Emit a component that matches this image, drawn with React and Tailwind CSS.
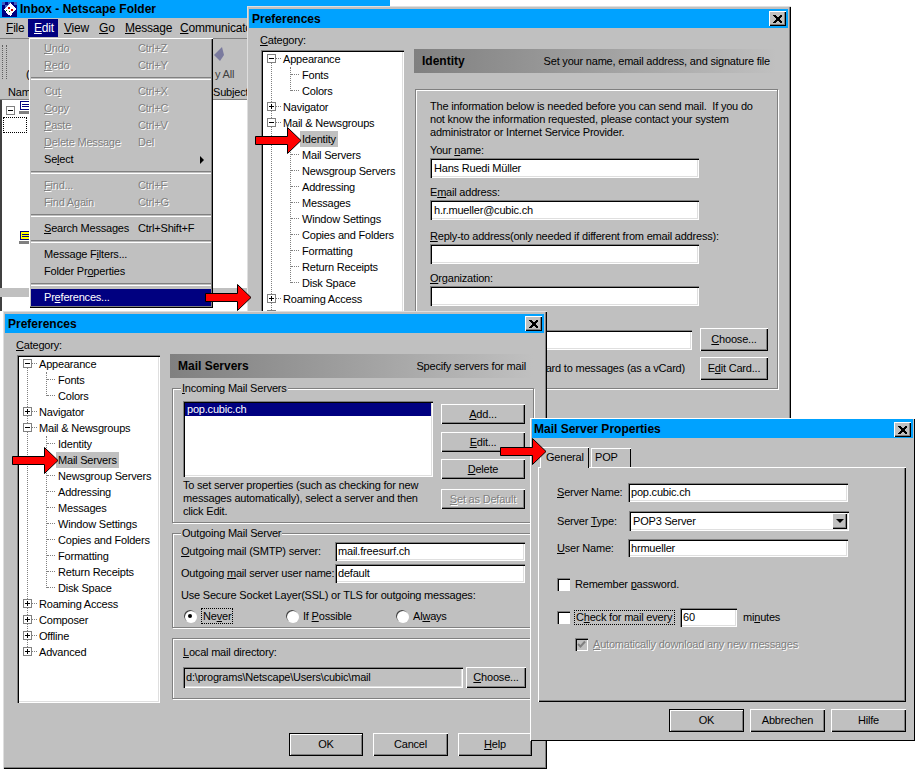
import React from 'react';

const RAISED = 'bg-[#c0c0c0] shadow-[inset_1px_1px_0_#fff,inset_-1px_-1px_0_#000,inset_-2px_-2px_0_#808080]';
const DEFAULT_BTN = 'bg-[#c0c0c0] shadow-[inset_0_0_0_1px_#000,inset_2px_2px_0_#fff,inset_-2px_-2px_0_#808080]';
const SUNKEN = 'shadow-[inset_1px_1px_0_#808080,inset_2px_2px_0_#000,inset_-1px_-1px_0_#fff,inset_-2px_-2px_0_#dfdfdf]';
const DISABLED = 'text-[#808080] [text-shadow:1px_1px_0_#fff]';
const ETCHED = 'relative border border-[#808080] shadow-[1px_1px_0_#fff,inset_1px_1px_0_#fff]';

function Arrow({ className }) {
  return (
    <svg className={`absolute z-50 ${className}`} width="47" height="27" viewBox="0 0 47 27">
      <polygon points="0.5,9.5 32.5,9.5 32.5,0.5 46,13.5 32.5,26.5 32.5,17.5 0.5,17.5" fill="#ff0000" stroke="#000" />
    </svg>
  );
}

function CloseButton() {
  return (
    <div className={`flex h-[15px] w-[17px] items-center justify-center ${RAISED}`}>
      <svg width="9" height="8" viewBox="0 0 9 8" shapeRendering="crispEdges">
        <path d="M0 0h2l2.500 2.500L7 0h2v1L6 4l3 3v1H7L4.500 5.500 2 8H0V7l3-3-3-3z" fill="#000" />
      </svg>
    </div>
  );
}

function TitleBar({ title, children, className = '' }) {
  return (
    <div className={`flex items-center justify-between bg-[#00a2ff] pr-[3px] text-[12px] font-bold tracking-normal text-black ${className}`}>
      <div className="flex items-center gap-[2px]">{children}{title}</div>
    </div>
  );
}

function Button({ children, className = '', isDefault, disabled }) {
  return (
    <div className={`flex items-center justify-center ${isDefault ? DEFAULT_BTN : RAISED} ${disabled ? DISABLED : ''} ${className}`}>
      <span>{children}</span>
    </div>
  );
}

function Input({ value, className = '', bg = 'bg-white', pad = 'pl-[4px]' }) {
  return (
    <div className={`flex items-center overflow-hidden ${bg} ${pad} ${SUNKEN} ${className}`}>
      {value}
    </div>
  );
}

function Toggle({ open, className = 'left-[6px] top-[3px]' }) {
  return (
    <div className={`absolute z-10 flex h-[9px] w-[9px] items-center justify-center border border-[#808080] bg-white ${className}`}>
      <svg width="7" height="7" viewBox="0 0 7 7" shapeRendering="crispEdges">
        <rect x="1" y="3" width="5" height="1" fill="#000" />
        {!open && <rect x="3" y="1" width="1" height="5" fill="#000" />}
      </svg>
    </div>
  );
}

function RootRow({ label, open }) {
  return (
    <div className="relative flex h-4 items-center pl-[22px]">
      <Toggle open={open} />
      <div className="absolute left-[15px] top-[7px] w-[5px] border-t border-dotted border-[#808080]" />
      <span>{label}</span>
    </div>
  );
}

function ChildGroup({ items, selected }) {
  return (
    <div className="relative">
      <div className="absolute bottom-[8px] left-[29px] top-0 border-l border-dotted border-[#808080]" />
      {items.map((item) => (
        <div key={item} className="relative flex h-4 items-center pl-[39px]">
          <div className="absolute left-[30px] top-[7px] w-[8px] border-t border-dotted border-[#808080]" />
          <span className={`px-[2px] leading-4 ${item === selected ? 'bg-[#c0c0c0]' : ''}`}>{item}</span>
        </div>
      ))}
    </div>
  );
}

function Tree({ selected }) {
  return (
    <div className={`relative h-[348px] w-[143px] bg-white pt-px ${SUNKEN}`}>
      <div className="absolute bottom-[50px] left-[10px] top-[8px] border-l border-dotted border-[#808080]" />
      <RootRow label="Appearance" open />
      <ChildGroup items={['Fonts', 'Colors']} selected={selected} />
      <RootRow label="Navigator" />
      <RootRow label="Mail & Newsgroups" open />
      <ChildGroup
        items={['Identity', 'Mail Servers', 'Newsgroup Servers', 'Addressing', 'Messages', 'Window Settings', 'Copies and Folders', 'Formatting', 'Return Receipts', 'Disk Space']}
        selected={selected}
      />
      <RootRow label="Roaming Access" />
      <RootRow label="Composer" />
      <RootRow label="Offline" />
      <RootRow label="Advanced" />
    </div>
  );
}

function Band({ title, subtitle }) {
  return (
    <div className="flex h-6 w-[363px] items-center justify-between bg-linear-to-r from-[#808080] to-[#c0c0c0] pl-2 pr-[7px]">
      <span className="text-[12px] font-bold tracking-normal">{title}</span>
      <span>{subtitle}</span>
    </div>
  );
}

function Legend({ children }) {
  return <div className="absolute -top-[7px] left-[8px] bg-[#c0c0c0] px-px leading-[13px]">{children}</div>;
}

function PrefWindow({ className, selected, children }) {
  return (
    <div className={`absolute h-[458px] w-[544px] bg-[#c0c0c0] py-[3px] pl-[2px] pr-[3px] shadow-[inset_1px_1px_0_#dfdfdf,inset_-1px_-1px_0_#000,inset_-2px_-2px_0_#808080] ${className}`}>
      <TitleBar title="Preferences" className="h-[19px] pl-[3px]" />
      <div className="absolute right-[5px] top-[5px]"><CloseButton /></div>
      <div className="flex pl-3">
        <div className="flex flex-col">
          <div className="-ml-px flex h-[22px] items-center pt-[2px]"><span><u>C</u>ategory:</span></div>
          <Tree selected={selected} />
        </div>
        <div className="ml-[10px] pt-[21px]">{children}</div>
      </div>
    </div>
  );
}

function IdentityPanel() {
  const fields = [
    { label: <>Your <u>n</u>ame:</>, value: 'Hans Ruedi Müller', gap: 'mt-0' },
    { label: <>E<u>m</u>ail address:</>, value: 'h.r.mueller@cubic.ch', gap: 'mt-[7px]' },
    { label: <><u>R</u>eply-to address(only needed if different from email address):</>, value: '', gap: 'mt-[9px]' },
    { label: <><u>O</u>rganization:</>, value: '', gap: 'mt-[7px]' },
  ];
  return (
    <div>
      <Band title="Identity" subtitle="Set your name, email address, and signature file" />
      <div className={`ml-px mt-4 h-[300px] w-[363px] pl-[14px] pt-[10px] ${ETCHED}`}>
        <p className="leading-[13px]">
          The information below is needed before you can send mail.&nbsp; If you do<br />
          not know the information requested, please contact your system<br />
          administrator or Internet Service Provider.
        </p>
        <div className="mt-[4px]">
          {fields.map((field, i) => (
            <div key={i} className={field.gap}>
              <div className="h-[14px] leading-[14px]">{field.label}</div>
              <Input value={field.value} className="mt-[1px] h-5 w-[269px]" />
            </div>
          ))}
        </div>
        <div className="mt-[22px] flex items-center gap-2">
          <Input value="" className="h-5 w-[262px]" />
          <Button className="h-[23px] w-[68px]"><u>C</u>hoose...</Button>
        </div>
        <div className="mt-[6px] flex items-center gap-2">
          <div className="w-[262px] pr-[7px] text-right">ard to messages (as a vCard)</div>
          <Button className="h-[23px] w-[68px]">E<u>d</u>it Card...</Button>
        </div>
      </div>
    </div>
  );
}

function Radio({ checked, label, className = '' }) {
  return (
    <div className={`flex items-center gap-[5px] ${className}`}>
      <div className="flex h-3 w-3 items-center justify-center rounded-full bg-white shadow-[inset_1px_1px_0_#404040,1px_1px_0_#fff]">
        {checked && <div className="h-1 w-1 rounded-full bg-black" />}
      </div>
      {label}
    </div>
  );
}

function MailServersPanel() {
  return (
    <div>
      <Band title="Mail Servers" subtitle="Specify servers for mail" />
      <div className={`ml-[2px] mt-[10px] flex h-[135px] w-[362px] gap-2 pl-[10px] pt-[12px] ${ETCHED}`}>
        <Legend><u>I</u>ncoming Mail Servers</Legend>
        <div>
          <div className={`h-[76px] w-[250px] bg-white p-[2px] ${SUNKEN}`}>
            <div className="h-[13px] bg-[#000080] pl-[2px] leading-[13px] text-white">pop.cubic.ch</div>
          </div>
          <p className="mt-[2px] w-[250px] leading-[13px]">
            To set server properties (such as checking for new<br />
            messages automatically), select a server and then<br />
            click Edit.
          </p>
        </div>
        <div className="flex flex-col pt-[3px]">
          <Button className="h-5 w-[84px]"><u>A</u>dd...</Button>
          <Button className="mt-2 h-5 w-[84px]"><u>E</u>dit...</Button>
          <Button className="mt-[7px] h-5 w-[84px]"><u>D</u>elete</Button>
          <Button className="mt-[10px] h-5 w-[84px]" disabled><u>S</u>et as Default</Button>
        </div>
      </div>
      <div className={`ml-[2px] mt-[10px] h-[95px] w-[362px] pl-2 pt-2 ${ETCHED}`}>
        <Legend>Outgoing Mail Server</Legend>
        <div className="flex h-[19px] items-center">
          <span className="w-[154px]"><u>O</u>utgoing mail (SMTP) server:</span>
          <Input value="mail.freesurf.ch" pad="pl-[3px]" className="h-[19px] w-[190px]" />
        </div>
        <div className="mt-[3px] flex h-[19px] items-center">
          <span className="w-[154px]">Outgoing <u>m</u>ail server user name:</span>
          <Input value="default" pad="pl-[3px]" className="h-[19px] w-[190px]" />
        </div>
        <div className="mt-[6px] leading-[13px]">Use Secure Socket Layer(SSL) or TLS for outgoing messages:</div>
        <div className="ml-[3px] mt-[6px] flex h-4">
          <Radio checked className="w-[102px]" label={<span className="border border-dotted border-black px-px leading-[14px]">Ne<u>v</u>er</span>} />
          <Radio className="w-[110px]" label={<span>If <u>P</u>ossible</span>} />
          <Radio label={<span>Al<u>w</u>ays</span>} />
        </div>
      </div>
      <div className={`ml-[2px] mt-[10px] h-[61px] w-[362px] pl-[10px] pt-[7px] ${ETCHED}`}>
        <div className="leading-[13px]"><u>L</u>ocal mail directory:</div>
        <div className="mt-[8px] flex gap-[3px]">
          <Input value="d:\programs\Netscape\Users\cubic\mail" bg="bg-[#c0c0c0]" pad="pl-[3px]" className="h-[21px] w-[280px]" />
          <Button className="h-[21px] w-[60px]"><u>C</u>hoose...</Button>
        </div>
      </div>
    </div>
  );
}

function MenuItem({ label, shortcut, disabled, arrow, active }) {
  return (
    <div className={`relative flex h-[17px] items-center pl-[13px] ${disabled ? DISABLED : ''} ${active ? 'bg-[#000080] text-white' : ''}`}>
      <span className="w-[94px] whitespace-nowrap">{label}</span>
      <span className="whitespace-nowrap">{shortcut}</span>
      {arrow && <div className="absolute right-[7px] top-[5px] h-0 w-0 border-y-[4px] border-l-[4px] border-y-transparent border-l-black" />}
    </div>
  );
}

function MenuSep() {
  return <div className="my-[3px] h-[3px] border-y border-t-[#808080] border-b-white" />;
}

function EditMenu() {
  return (
    <div className={`absolute left-[29px] top-[38px] z-10 h-[270px] w-[184px] p-[2px] ${RAISED}`}>
      <MenuItem disabled label={<><u>U</u>ndo</>} shortcut="Ctrl+Z" />
      <MenuItem disabled label={<><u>R</u>edo</>} shortcut="Ctrl+Y" />
      <MenuSep />
      <MenuItem disabled label={<>Cu<u>t</u></>} shortcut="Ctrl+X" />
      <MenuItem disabled label={<><u>C</u>opy</>} shortcut="Ctrl+C" />
      <MenuItem disabled label={<><u>P</u>aste</>} shortcut="Ctrl+V" />
      <MenuItem disabled label={<><u>D</u>elete Message</>} shortcut="Del" />
      <MenuItem label={<>Se<u>l</u>ect</>} arrow />
      <MenuSep />
      <MenuItem disabled label={<><u>F</u>ind...</>} shortcut="Ctrl+F" />
      <MenuItem disabled label={<>Find A<u>g</u>ain</>} shortcut="Ctrl+G" />
      <MenuSep />
      <MenuItem label={<><u>S</u>earch Messages</>} shortcut="Ctrl+Shift+F" />
      <MenuSep />
      <MenuItem label={<>Message F<u>i</u>lters...</>} />
      <MenuItem label={<>Folder Pr<u>o</u>perties</>} />
      <MenuSep />
      <MenuItem active label={<>Pr<u>e</u>ferences...</>} />
    </div>
  );
}

function NetscapeIcon() {
  return (
    <svg width="17" height="17" viewBox="0 0 17 17" shapeRendering="crispEdges">
      <rect x="1" y="1" width="15" height="15" fill="#000080" />
      <path d="M1 1h3v3H1zM7 1h3v3H7zM13 1h3v3h-3zM4 4h3v3H4z" fill="#4060c0" />
      <path d="M3 8l6-6 6 6-3 3-2 4-3-1-4-6z" fill="#fff" />
      <path d="M7 6h2v2H7zM10 8h2v2h-2z" fill="#c00000" />
      <path d="M5 9h1v1H5zM8 10h1v1H8z" fill="#008000" />
    </svg>
  );
}

function MailIcon({ color }) {
  return (
    <svg width="15" height="14" viewBox="0 0 15 14" shapeRendering="crispEdges">
      <rect x="1" y="0" width="13" height="9" fill="#000080" />
      <rect x="2" y="1" width="11" height="7" fill={color} />
      <path d="M3 3h8v1H3zM3 5h8v1H3z" fill="#000080" />
      <path d="M0 10h12v3H0z" fill="#808080" />
    </svg>
  );
}

function MainWindow() {
  const menus = [
    [<><u>F</u>ile</>, 'w-[28px] pl-[6px]'],
    [<><u>E</u>dit</>, 'w-[30px] bg-[#000080] pl-[6px] text-white'],
    [<><u>V</u>iew</>, 'ml-[6px] w-[35px]'],
    [<><u>G</u>o</>, 'w-[26px]'],
    [<><u>M</u>essage</>, 'w-[55px]'],
    [<><u>C</u>ommunicator</>, 'w-[80px]'],
  ];
  return (
    <div className="absolute left-0 top-0 h-[311px] w-[390px] overflow-hidden bg-[#c0c0c0]">
      <TitleBar title="Inbox - Netscape Folder" className="h-[18px] pl-px">
        <NetscapeIcon />
      </TitleBar>
      <div className="flex h-[20px] items-center text-[12px]">
        {menus.map(([label, cls], i) => (
          <div key={i} className={`flex h-[18px] items-center ${cls}`}><span>{label}</span></div>
        ))}
      </div>
      <div className="relative h-[47px] border-t border-[#808080]">
        <div className="absolute left-[2px] top-[6px] h-[34px] w-[5px] border-x border-dotted border-[#606060]" />
        <span className="absolute left-[26px] top-[27px]">(</span>
        <svg className="absolute left-[214px] top-[8px]" width="10" height="14" viewBox="0 0 10 14">
          <path d="M0 8l8-8 2 8-4 6z" fill="#7a7a9e" />
        </svg>
        <span className="absolute left-[215px] top-[27px] text-[#404040]">y All</span>
      </div>
      <div className="flex h-[15px] items-center border-b border-[#808080] pl-2">
        <span className="w-[205px]">Nam</span>
        <span>Subject</span>
      </div>
      <div className="relative h-[188px] border-l-2 border-[#404040] bg-white">
        <Toggle open className="left-[4px] top-[6px]" />
        <div className="absolute left-[17px] top-px"><MailIcon color="#ffffff" /></div>
        <div className="absolute left-px top-[17px] h-4 w-6 border border-dotted border-black" />
        <div className="absolute left-[17px] top-[131px]"><MailIcon color="#ffff00" /></div>
      </div>
      <div className="h-[9px] bg-[#c0c0c0]" />
      <div className="h-[14px] border-l-2 border-[#404040] bg-white" />
    </div>
  );
}

function Checkbox({ checked, disabled }) {
  return (
    <div className={`flex h-[13px] w-[13px] shrink-0 items-center justify-center ${disabled ? 'bg-[#c0c0c0]' : 'bg-white'} shadow-[inset_1px_1px_0_#808080,inset_2px_2px_0_#000,inset_-1px_-1px_0_#fff]`}>
      {checked && (
        <svg width="9" height="9" viewBox="0 0 9 9">
          <path d="M1 4l2.500 2.500L8 1.500" fill="none" stroke="#808080" strokeWidth="2" />
        </svg>
      )}
    </div>
  );
}

function MailServerProps() {
  return (
    <div className="absolute left-[530px] top-[418px] z-20 h-[323px] w-[385px] bg-[#c0c0c0] p-[2px] pt-px shadow-[inset_1px_1px_0_#fff,inset_-1px_-1px_0_#000]">
      <TitleBar title="Mail Server Properties" className="h-[19px] pl-[2px]" />
      <div className="absolute right-[4px] top-[4px]"><CloseButton /></div>
      <div className="ml-[6px] mt-2 flex h-[21px] items-end">
        <div className="relative z-10 -mb-px ml-[2px] flex h-[21px] w-[49px] items-center bg-[#c0c0c0] pl-[6px] shadow-[inset_1px_1px_0_#fff,inset_-1px_0_0_#000]">General</div>
        <div className="ml-[2px] flex h-[19px] w-[40px] items-center pl-[4px] shadow-[inset_1px_1px_0_#fff,inset_-1px_0_0_#000]">POP</div>
      </div>
      <div className="ml-[6px] h-[235px] w-[368px] pl-[19px] pt-4 shadow-[inset_1px_1px_0_#fff,inset_-1px_-1px_0_#000,inset_-2px_-2px_0_#808080]">
        <div className="flex h-[19px] items-center">
          <span className="w-[71px]"><u>S</u>erver Name:</span>
          <Input value="pop.cubic.ch" pad="pl-[3px]" className="h-[19px] w-[220px]" />
        </div>
        <div className="mt-[9px] flex h-5 items-center">
          <span className="w-[72px]">Server <u>T</u>ype:</span>
          <div className={`flex h-5 w-[220px] items-center justify-between bg-white pl-[4px] pr-[2px] ${SUNKEN}`}>
            <span>POP3 Server</span>
            <div className={`flex h-[16px] w-[15px] items-center justify-center ${RAISED}`}>
              <div className="h-0 w-0 border-x-[4px] border-t-[4px] border-x-transparent border-t-black" />
            </div>
          </div>
        </div>
        <div className="mt-2 flex h-[18px] items-center">
          <span className="w-[71px]"><u>U</u>ser Name:</span>
          <Input value="hrmueller" pad="pl-[3px]" className="h-[18px] w-[220px]" />
        </div>
        <div className="mt-[21px] flex h-[13px] items-center gap-[5px]">
          <Checkbox />
          <span>Remember <u>p</u>assword.</span>
        </div>
        <div className="mt-[17px] flex h-[19px] items-center">
          <Checkbox />
          <span className="ml-[4px] w-[101px] border border-dotted border-black pl-px leading-[13px]">C<u>h</u>eck for mail every</span>
          <Input value="60" pad="pl-[3px]" className="ml-[5px] h-[19px] w-[57px]" />
          <span className="ml-[6px]">mi<u>n</u>utes</span>
        </div>
        <div className="ml-[18px] mt-[11px] flex h-[13px] items-center gap-[5px]">
          <Checkbox checked disabled />
          <span className={DISABLED}><u>A</u>utomatically download any new messages</span>
        </div>
      </div>
      <div className="ml-[137px] mt-[7px] flex gap-[6px]">
        <Button isDefault className="h-[23px] w-[75px]">OK</Button>
        <Button className="h-[23px] w-[75px]">Abbrechen</Button>
        <Button className="h-[23px] w-[75px]">Hilfe</Button>
      </div>
    </div>
  );
}

export default function App() {
  return (
    <div className="relative h-[771px] w-[915px] overflow-hidden bg-white text-[11px] tracking-[-0.2px] text-black [font-family:'Liberation_Sans',Arial,sans-serif]">
      <MainWindow />
      <EditMenu />
      <PrefWindow className="left-[247px] top-[6px]" selected="Identity">
        <IdentityPanel />
      </PrefWindow>
      <div className="relative z-10">
        <PrefWindow className="left-[3px] top-[311px]" selected="Mail Servers">
          <MailServersPanel />
          <div className="absolute right-[15px] top-[422px] flex gap-[10px]">
            <Button isDefault className="h-[23px] w-[74px]">OK</Button>
            <Button className="h-[23px] w-[75px]">Cancel</Button>
            <Button className="h-[23px] w-[74px]"><u>H</u>elp</Button>
          </div>
        </PrefWindow>
      </div>
      <MailServerProps />
      <Arrow className="left-[205px] top-[284px]" />
      <Arrow className="left-[255px] top-[127px]" />
      <Arrow className="left-[12px] top-[447px]" />
      <Arrow className="left-[500px] top-[438px]" />
    </div>
  );
}
